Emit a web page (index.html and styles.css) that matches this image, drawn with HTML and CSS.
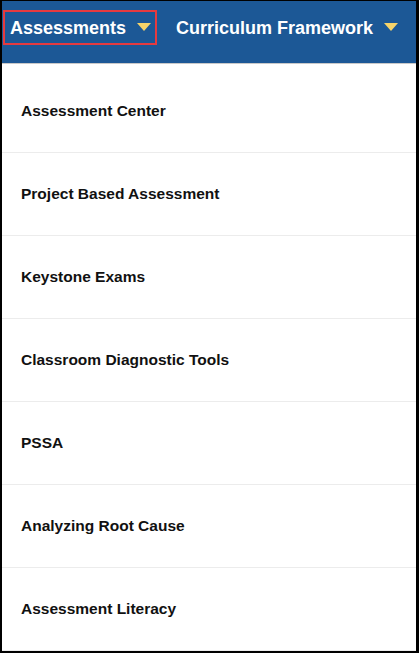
FILE: index.html
```html
<!DOCTYPE html>
<html>
<head>
<meta charset="utf-8">
<link rel="stylesheet" href="styles.css">
</head>
<body>
<div class="frame">
  <nav class="topbar">
    <div class="tab tab-active">
      <span class="tab-label">Assessments</span>
      <svg class="caret" width="14" height="8" viewBox="0 0 14 8"><polygon points="0,0 14,0 7,8" fill="#f6d46a"/></svg>
    </div>
    <div class="tab">
      <span class="tab-label">Curriculum Framework</span>
      <svg class="caret" width="14" height="8" viewBox="0 0 14 8"><polygon points="0,0 14,0 7,8" fill="#f6d46a"/></svg>
    </div>
  </nav>
  <ul class="menu">
    <li class="menu-item">Assessment Center</li>
    <li class="menu-item">Project Based Assessment</li>
    <li class="menu-item">Keystone Exams</li>
    <li class="menu-item">Classroom Diagnostic Tools</li>
    <li class="menu-item">PSSA</li>
    <li class="menu-item">Analyzing Root Cause</li>
    <li class="menu-item">Assessment Literacy</li>
  </ul>
</div>
</body>
</html>
```

FILE: styles.css
```css
html, body {
  margin: 0;
  padding: 0;
  background: #000;
}
body {
  font-family: "Liberation Sans", Arial, sans-serif;
}
.frame {
  width: 414px;
  height: 650px;
  margin: 1px 3px 2px 2px;
  background: #fff;
  overflow: hidden;
  display: flex;
  flex-direction: column;
}
.topbar {
  height: 63px;
  background: #1c5896;
  border-bottom: 1px solid #c9c9c9;
  display: flex;
  align-items: flex-start;
  padding-top: 9px;
  box-sizing: border-box;
  flex-shrink: 0;
}
.tab {
  display: flex;
  align-items: center;
  gap: 11px;
  height: 35px;
  padding: 2px 0 0 0;
  box-sizing: border-box;
  color: #fff;
  font-size: 18px;
  font-weight: 700;
  white-space: nowrap;
  flex-shrink: 0;
}
.tab-active {
  margin-left: 1px;
  width: 154px;
  border: 2px solid #e63a3f;
  padding-left: 5px;
}
.tab + .tab {
  padding-left: 19px;
}
.caret {
  display: block;
  flex-shrink: 0;
  margin-top: -3px;
}
.menu {
  list-style: none;
  margin: 0;
  padding: 6px 0 0 0;
}
.menu-item {
  height: 81px;
  border-bottom: 1px solid #ececec;
  display: flex;
  align-items: center;
  padding: 0 0 1px 19px;
  box-sizing: content-box;
  font-size: 15.5px;
  font-weight: 700;
  color: #111;
}
```
